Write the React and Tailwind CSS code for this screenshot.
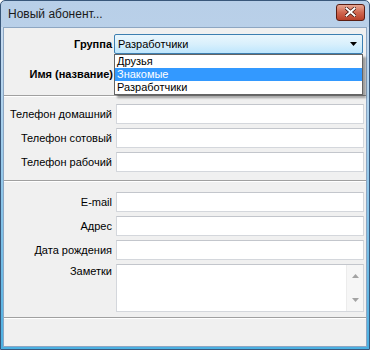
import React from 'react'

const FONT = { fontFamily: '"Liberation Sans", "DejaVu Sans", sans-serif' }

function Field({ label }) {
  return (
    <div className="flex items-center">
      <span className="w-[109px] pr-[1px] text-right text-[11px] text-black whitespace-nowrap">{label}</span>
      <div className="ml-[3px] h-[20px] w-[248px] border border-[#d4d7dc] border-t-[#c3c6cc] bg-white" />
    </div>
  )
}

function Separator() {
  return <div className="h-[2px] border-t border-[#a0a0a0] border-b border-b-white" />
}

export default function App() {
  return (
    <div style={FONT} className="w-[371px] h-[350px] bg-white">
      <div className="w-[370px] h-[350px] flex flex-col rounded-t-[5px] border border-[#39577a] bg-gradient-to-b from-[#b8cfe8] to-[#c9dcf0] overflow-hidden">
        {/* title bar */}
        <div className="h-[26px] flex items-center justify-between pl-[7px] pr-[4px] shrink-0">
          <span className="text-[12px] text-[#1a1a1a]">Новый абонент...</span>
          <div className="w-[29px] h-[17px] mt-[-4px] rounded-[3px] border border-[#5b1d12] bg-gradient-to-b from-[#e5a692] via-[#d06750] to-[#b8402a] flex items-center justify-center">
            <svg width="11" height="10" viewBox="0 0 11 10">
              <path d="M1.5 1.5 L9.5 8.5 M9.5 1.5 L1.5 8.5" stroke="#3b1008" strokeWidth="3.4" strokeLinecap="square" />
              <path d="M1.5 1.5 L9.5 8.5 M9.5 1.5 L1.5 8.5" stroke="#ffffff" strokeWidth="2" strokeLinecap="square" />
            </svg>
          </div>
        </div>

        {/* client area with side frame */}
        <div className="flex-1 flex px-[2px] pb-[2px] bg-gradient-to-b from-[#c9dcf0] to-[#4ab0e2]">
          <div className="flex-1 flex flex-col bg-[#f0f0f0] border border-[#8da6c2]">
            <div className="relative pt-[6px]">
              {/* group combo */}
              <div className="flex items-center">
                <span className="w-[108px] text-right text-[11px] font-bold text-black">Группа</span>
                <div className="ml-[2px] h-[20px] w-[249px] border border-[#3c7fb1] rounded-[2px] bg-gradient-to-b from-[#eaf6fd] via-[#d9f0fc] to-[#bee6fd] flex items-center justify-between pl-[3px] pr-[5px]">
                  <span className="text-[11px] text-black">Разработчики</span>
                  <svg width="7" height="4" viewBox="0 0 7 4"><path d="M0 0 H7 L3.5 4 Z" fill="#000" /></svg>
                </div>
              </div>
              <div className="flex items-center mt-[10px]">
                <span className="w-[109px] text-right text-[11px] font-bold text-black">Имя (название)</span>
                <div className="ml-[3px] h-[20px] w-[245px] bg-white" />
              </div>

              {/* dropdown list */}
              <div className="absolute left-[110px] top-[26px] w-[249px] border border-[#646464] bg-white shadow-[3px_3px_2px_rgba(0,0,0,0.35)]">
                <div className="h-[13px] leading-[13px] pl-[2px] text-[11px] text-black">Друзья</div>
                <div className="h-[13px] leading-[13px] pl-[2px] text-[11px] text-white bg-[#3399ff]">Знакомые</div>
                <div className="h-[13px] leading-[13px] pl-[2px] text-[11px] text-black">Разработчики</div>
              </div>
            </div>

            <div className="mt-[11px]"><Separator /></div>

            <div className="flex flex-col gap-[4px] pt-[7px]">
              <Field label="Телефон домашний" />
              <Field label="Телефон сотовый" />
              <Field label="Телефон рабочий" />
            </div>

            <div className="mt-[8px]"><Separator /></div>

            <div className="flex flex-col gap-[4px] pt-[10px]">
              <Field label="E-mail" />
              <Field label="Адрес" />
              <Field label="Дата рождения" />
              <div className="flex items-start">
                <span className="w-[109px] pr-[1px] text-right text-[11px] text-black mt-[-1px]">Заметки</span>
                <div className="ml-[3px] h-[48px] w-[248px] border border-[#d4d7dc] border-t-[#c3c6cc] bg-white flex justify-end">
                  <div className="w-[17px] h-full bg-[#f6f6f6] border-l border-[#ececec] flex flex-col items-center justify-between py-[9px]">
                    <svg width="7" height="4" viewBox="0 0 7 4"><path d="M0 4 H7 L3.5 0 Z" fill="#a3a3a3" /></svg>
                    <svg width="7" height="4" viewBox="0 0 7 4"><path d="M0 0 H7 L3.5 4 Z" fill="#a3a3a3" /></svg>
                  </div>
                </div>
              </div>
            </div>

            <div className="mt-[5px]"><Separator /></div>
          </div>
        </div>
      </div>
    </div>
  )
}
